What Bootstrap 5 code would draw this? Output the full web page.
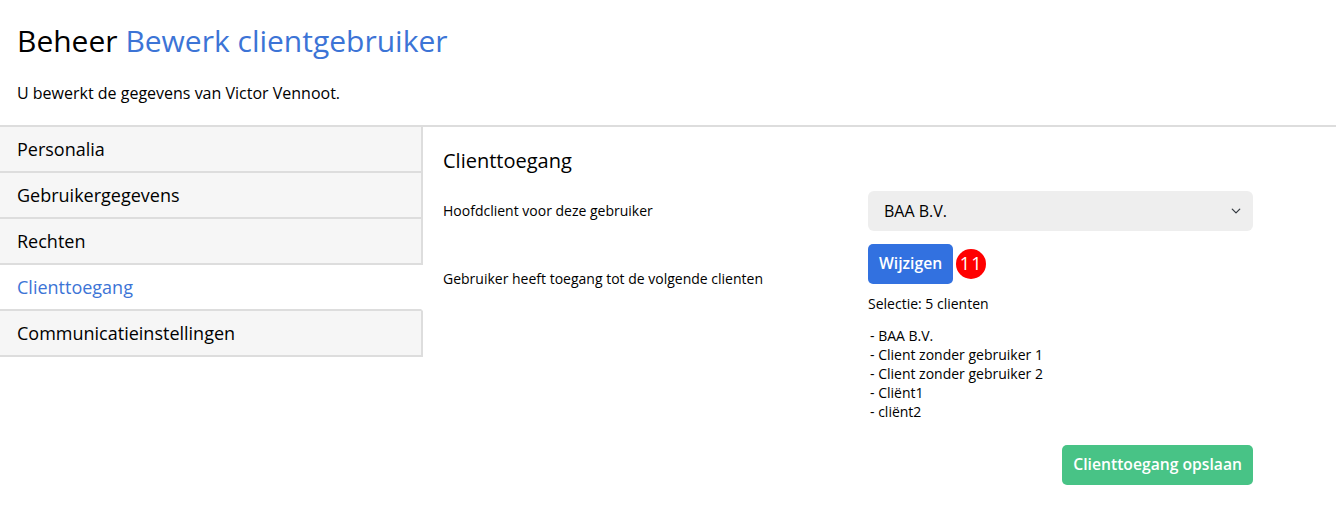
<!DOCTYPE html>
<html lang="nl">
<head>
    <meta charset="UTF-8">
    <meta name="viewport" content="width=device-width, initial-scale=1.0">
    <title>Bewerk clientgebruiker</title>
    <link href="https://cdn.jsdelivr.net/npm/bootstrap@5.3.0/dist/css/bootstrap.min.css" rel="stylesheet">
    <style>
        body {
            font-family: "Open Sans", "Liberation Sans", sans-serif;
            color: #000;
            background: #fff;
        }
        .page-head {
            height: 125px;
            padding: 19px 17px 0;
        }
        .page-head h1 {
            font-size: 30px;
            line-height: 44px;
            font-weight: 400;
            margin: 0 0 19px;
        }
        .page-head h1 span,
        .side-link.current {
            color: #3c74d6;
        }
        .page-head p {
            font-size: 16px;
            line-height: 22px;
            margin: 0;
        }
        .page-body {
            border-top: 2px solid #ddd;
        }
        .side-menu {
            width: 423px;
            flex: none;
        }
        .side-link {
            display: block;
            height: 46px;
            padding: 0 17px;
            font-size: 18px;
            line-height: 44px;
            color: #000;
            text-decoration: none;
            background: #f6f6f6;
            border-right: 2px solid #ddd;
            border-bottom: 2px solid #ddd;
        }
        .side-link.current {
            background: #fff;
            border-right-color: transparent;
        }
        .edit-pane {
            padding: 20px 0 0 20px;
            width: 830px;
        }
        .edit-pane h2 {
            font-size: 20px;
            line-height: 28px;
            font-weight: 400;
            margin: 0 0 16px;
        }
        .field-label {
            width: 425px;
            flex: none;
            font-size: 14px;
            line-height: 19px;
        }
        .main-label {
            padding-bottom: 2px;
        }
        .access-label {
            padding-top: 25px;
        }
        .field-value {
            width: 385px;
            flex: none;
        }
        .client-select {
            height: 40px;
            padding: 0 16px;
            font-size: 16px;
            color: #000;
            background-color: #eee;
            background-position: right 10px center;
            background-size: 14px 10px;
            border: 0;
            border-radius: 6px;
        }
        .change-btn,
        .save-btn {
            height: 40px;
            padding: 0 11px;
            font-size: 15.7px;
            font-weight: 600;
            color: #fff;
            border: 0;
            border-radius: 5px;
        }
        .change-btn {
            background: #3271e0;
        }
        .save-btn {
            background: #48c386;
        }
        .count-dot {
            width: 30px;
            height: 30px;
            margin-left: 3px;
            background: #f00;
            color: #fff;
            font-size: 18px;
            line-height: 29px;
            letter-spacing: 1px;
        }
        .client-row {
            margin-top: 13px;
        }
        .small-text {
            font-size: 14px;
            line-height: 19px;
        }
        .selection-text {
            margin-top: 10px;
        }
        .client-list {
            margin-top: 13px;
            padding-left: 2px;
        }
        .save-row {
            margin-top: 24px;
        }
    </style>
</head>
<body>
    <div class="page-head">
        <h1>Beheer <span>Bewerk clientgebruiker</span></h1>
        <p>U bewerkt de gegevens van Victor Vennoot.</p>
    </div>

    <div class="page-body d-flex">
        <!-- linker menu -->
        <nav class="side-menu">
            <a class="side-link" href="#">Personalia</a>
            <a class="side-link" href="#">Gebruikergegevens</a>
            <a class="side-link" href="#">Rechten</a>
            <a class="side-link current" href="#">Clienttoegang</a>
            <a class="side-link" href="#">Communicatieinstellingen</a>
        </nav>

        <main class="edit-pane">
            <h2>Clienttoegang</h2>

            <div class="d-flex align-items-center">
                <div class="field-label main-label">Hoofdclient voor deze gebruiker</div>
                <div class="field-value">
                    <select class="form-select client-select">
                        <option>BAA B.V.</option>
                    </select>
                </div>
            </div>

            <div class="d-flex client-row">
                <div class="field-label access-label">Gebruiker heeft toegang tot de volgende clienten</div>
                <div class="field-value">
                    <div class="d-flex align-items-center">
                        <button class="btn change-btn" type="button">Wijzigen</button>
                        <span class="count-dot rounded-circle text-center">11</span>
                    </div>
                    <div class="small-text selection-text">Selectie: 5 clienten</div>
                    <div class="small-text client-list">
                        - BAA B.V.<br>
                        - Client zonder gebruiker 1<br>
                        - Client zonder gebruiker 2<br>
                        - Cliënt1<br>
                        - cliënt2
                    </div>
                    <div class="text-end save-row">
                        <button class="btn save-btn" type="button">Clienttoegang opslaan</button>
                    </div>
                </div>
            </div>
        </main>
    </div>
</body>
</html>
